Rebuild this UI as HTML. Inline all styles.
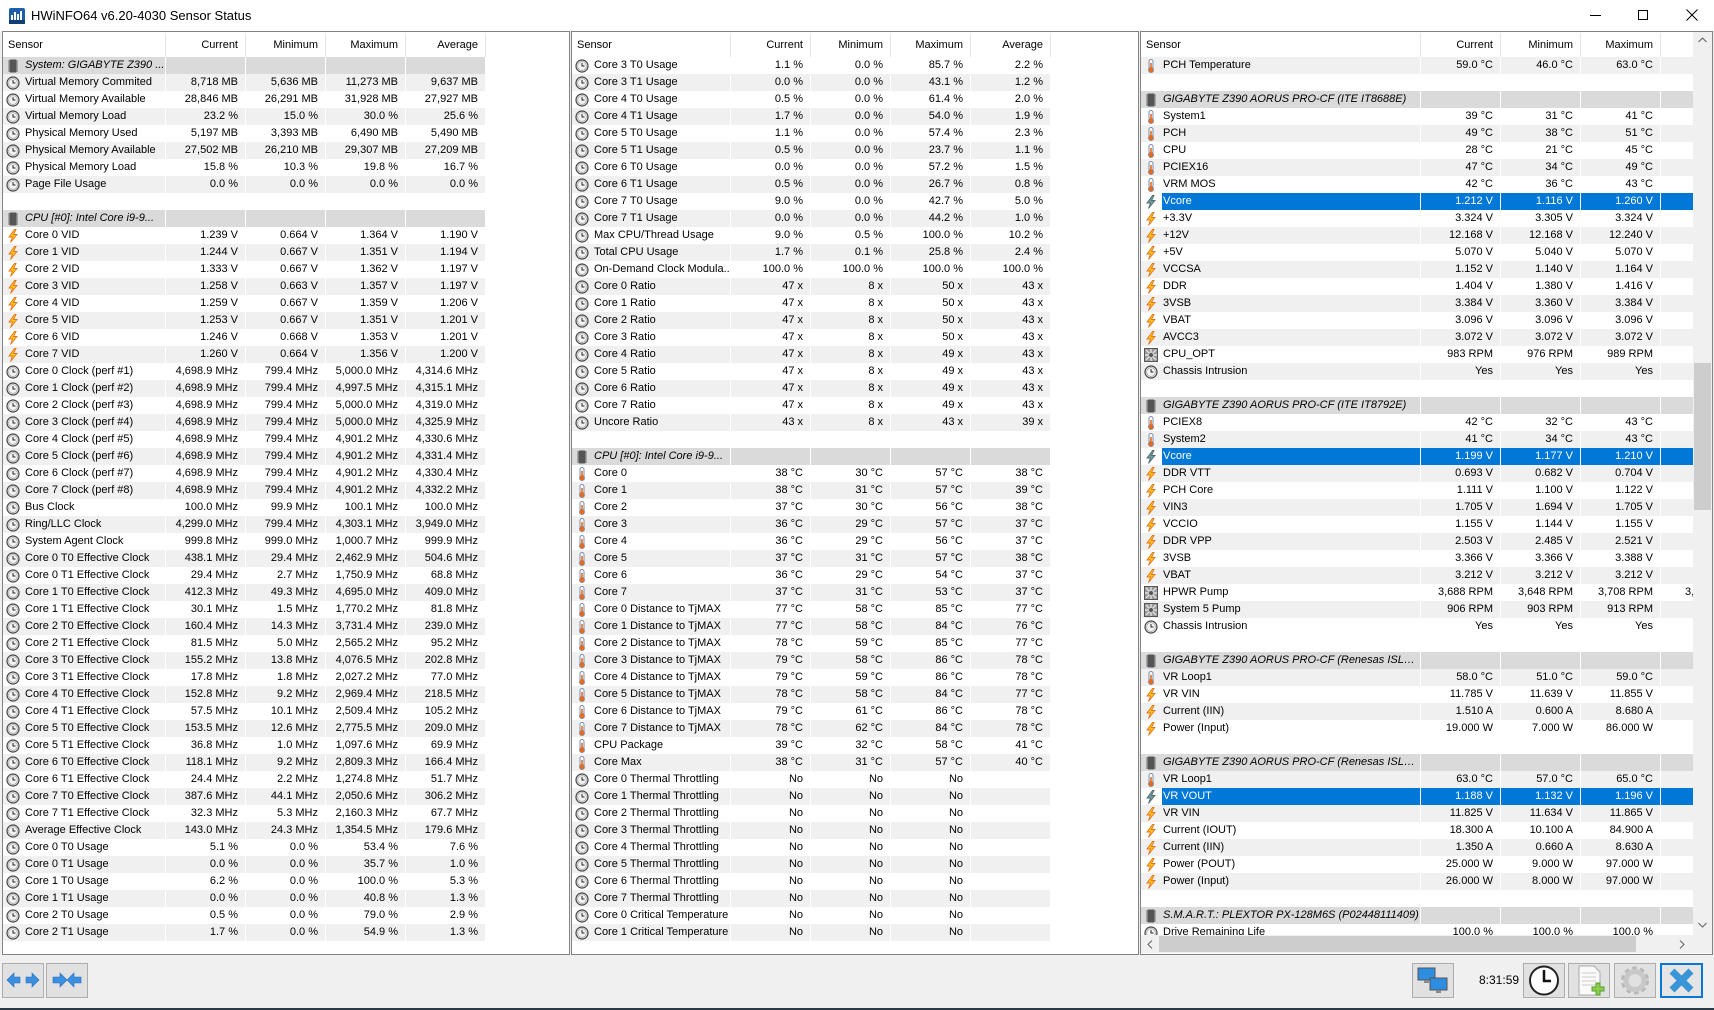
<!DOCTYPE html>
<html><head><meta charset="utf-8">
<style>
*{box-sizing:border-box}
body{margin:0;width:1714px;height:1010px;background:#f0f0f0;position:relative;overflow:hidden;font:11px "Liberation Sans",sans-serif;color:#000}
.tb{position:absolute;left:0;top:0;width:1714px;height:31px;background:#fff}
.tt{position:absolute;left:31px;top:8px;font-size:13px}
.p{position:absolute;top:31px;height:924px;background:#fff;border:1px solid #828282;overflow:hidden}
.hd{height:24px;margin-top:1px;display:flex;white-space:nowrap}
.hd span{flex:none;border-right:1px solid #e5e5e5;text-align:right;padding-right:7px;line-height:24px;width:80px}
.hd span:first-child{text-align:left;padding-left:5px}
.r{display:flex;height:17px;line-height:17px;white-space:nowrap}
.r>*{flex:none;margin-right:1px;overflow:hidden}
.r b{font-weight:normal;display:flex}
.r b span{overflow:hidden;text-overflow:ellipsis;min-width:0;flex:1}
.r i{width:22px;flex:none;display:flex;align-items:center;padding-left:3px}
.r i svg{width:14px;height:14px}
.r u{text-decoration:none;width:79px;text-align:right;padding-right:7px}
.p3 .r u:last-child{padding-right:0}
.p1 .r b,.p1 .hd span:first-child{width:162px}
.p1 .hd span:first-child{width:163px}
.p2 .r b{width:158px}.p2 .hd span:first-child{width:159px}
.p3 .r b{width:279px}.p3 .hd span:first-child{width:280px}
.o .r:nth-child(even)>*{background:#f0f0f0}
.ev .r:nth-child(odd)>*{background:#f0f0f0}
.r.e>*{background:#fff!important}
.r.g>*{background:#dadada!important}
.r.g b{font-style:italic}
.r.s>*{background:#0078d7!important;color:#fff}
.r.s b{background:linear-gradient(to right,#fff 21px,#0078d7 21px)!important}
.vs{position:absolute;left:1693px;top:32px;width:19px;height:903px;background:#f0f0f0}
.hs{position:absolute;left:1141px;top:935px;width:571px;height:18px;background:#f0f0f0}
.btn{position:absolute;top:963px;height:35px;background:#e1e1e1;border:1px solid #adadad}
</style></head><body>
<svg width="0" height="0" style="position:absolute">
<defs>
<symbol id="c" viewBox="0 0 14 14"><circle cx="7" cy="7" r="6" fill="#e6e6e6" stroke="#444" stroke-width="1.2"/><circle cx="7" cy="7" r="4.3" fill="#f4f4f4" stroke="#999" stroke-width=".6"/><path d="M7 4v3h2.5" stroke="#222" fill="none" stroke-width="1"/></symbol>
<symbol id="v" viewBox="0 0 14 14"><path d="M8.5 0.5L3 8h3.5L4.5 13.5 11 5.5H7.5L10 0.5z" fill="#ffc61a" stroke="#e4731a" stroke-width=".9"/></symbol>
<symbol id="vs" viewBox="0 0 14 14"><path d="M8.5 0.5L3 8h3.5L4.5 13.5 11 5.5H7.5L10 0.5z" fill="#7a9aa0" stroke="#4b6c70" stroke-width=".9"/></symbol>
<symbol id="t" viewBox="0 0 14 14"><rect x="5" y="0.5" width="4" height="10" rx="2" fill="#fff" stroke="#7a8ca8"/><circle cx="7" cy="11" r="2.6" fill="#ea6a1c" stroke="#7a8ca8" stroke-width=".7"/><rect x="6.2" y="4" width="1.6" height="7" fill="#ea6a1c"/></symbol>
<symbol id="k" viewBox="0 0 14 14"><rect x="3.5" y="0.5" width="7" height="13" fill="#555" rx="1"/><path d="M2 2h1.5M2 4h1.5M2 6h1.5M2 8h1.5M2 10h1.5M2 12h1.5M10.5 2H12M10.5 4H12M10.5 6H12M10.5 8H12M10.5 10H12M10.5 12H12" stroke="#777"/></symbol>
<symbol id="f" viewBox="0 0 14 14"><rect x="0.5" y="0.5" width="13" height="13" fill="#9a9a9a" stroke="#555"/><path d="M7 1v12M1 7h12M2 2l10 10M12 2L2 12" stroke="#eee" stroke-width="1.2"/><circle cx="7" cy="7" r="2" fill="#555"/></symbol>
</defs></svg>

<div class="tb">
<svg style="position:absolute;left:9px;top:8px" width="16" height="16" viewBox="0 0 16 16"><rect width="16" height="16" rx="2" fill="#1d5fa8"/><path d="M3 13V7M6 13V4M9 13V6M12 13V3" stroke="#fff" stroke-width="2"/><rect x="0" y="12" width="16" height="4" fill="#0f3e75"/></svg>
<div class="tt">HWiNFO64 v6.20-4030 Sensor Status</div>
<div style="position:absolute;left:1590px;top:15px;width:11px;height:1px;background:#000"></div>
<div style="position:absolute;left:1638px;top:10px;width:10px;height:10px;border:1px solid #000"></div>
<svg style="position:absolute;left:1686px;top:9px" width="12" height="12"><path d="M0.5 0.5L11.5 11.5M11.5 0.5L0.5 11.5" stroke="#000"/></svg>
</div>

<div class="p p1 o" style="left:2px;width:568px">
<div class="hd"><span>Sensor</span><span>Current</span><span>Minimum</span><span>Maximum</span><span>Average</span></div>
<div>
<div class="r g"><b><i><svg><use href="#k"/></svg></i>System: GIGABYTE Z390 ...</b><u></u><u></u><u></u><u></u></div>
<div class="r"><b><i><svg><use href="#c"/></svg></i>Virtual Memory Commited</b><u>8,718 MB</u><u>5,636 MB</u><u>11,273 MB</u><u>9,637 MB</u></div>
<div class="r"><b><i><svg><use href="#c"/></svg></i>Virtual Memory Available</b><u>28,846 MB</u><u>26,291 MB</u><u>31,928 MB</u><u>27,927 MB</u></div>
<div class="r"><b><i><svg><use href="#c"/></svg></i>Virtual Memory Load</b><u>23.2 %</u><u>15.0 %</u><u>30.0 %</u><u>25.6 %</u></div>
<div class="r"><b><i><svg><use href="#c"/></svg></i>Physical Memory Used</b><u>5,197 MB</u><u>3,393 MB</u><u>6,490 MB</u><u>5,490 MB</u></div>
<div class="r"><b><i><svg><use href="#c"/></svg></i>Physical Memory Available</b><u>27,502 MB</u><u>26,210 MB</u><u>29,307 MB</u><u>27,209 MB</u></div>
<div class="r"><b><i><svg><use href="#c"/></svg></i>Physical Memory Load</b><u>15.8 %</u><u>10.3 %</u><u>19.8 %</u><u>16.7 %</u></div>
<div class="r"><b><i><svg><use href="#c"/></svg></i>Page File Usage</b><u>0.0 %</u><u>0.0 %</u><u>0.0 %</u><u>0.0 %</u></div>
<div class="r e"><b></b><u></u><u></u><u></u><u></u></div>
<div class="r g"><b><i><svg><use href="#k"/></svg></i>CPU [#0]: Intel Core i9-9...</b><u></u><u></u><u></u><u></u></div>
<div class="r"><b><i><svg><use href="#v"/></svg></i>Core 0 VID</b><u>1.239 V</u><u>0.664 V</u><u>1.364 V</u><u>1.190 V</u></div>
<div class="r"><b><i><svg><use href="#v"/></svg></i>Core 1 VID</b><u>1.244 V</u><u>0.667 V</u><u>1.351 V</u><u>1.194 V</u></div>
<div class="r"><b><i><svg><use href="#v"/></svg></i>Core 2 VID</b><u>1.333 V</u><u>0.667 V</u><u>1.362 V</u><u>1.197 V</u></div>
<div class="r"><b><i><svg><use href="#v"/></svg></i>Core 3 VID</b><u>1.258 V</u><u>0.663 V</u><u>1.357 V</u><u>1.197 V</u></div>
<div class="r"><b><i><svg><use href="#v"/></svg></i>Core 4 VID</b><u>1.259 V</u><u>0.667 V</u><u>1.359 V</u><u>1.206 V</u></div>
<div class="r"><b><i><svg><use href="#v"/></svg></i>Core 5 VID</b><u>1.253 V</u><u>0.667 V</u><u>1.351 V</u><u>1.201 V</u></div>
<div class="r"><b><i><svg><use href="#v"/></svg></i>Core 6 VID</b><u>1.246 V</u><u>0.668 V</u><u>1.353 V</u><u>1.201 V</u></div>
<div class="r"><b><i><svg><use href="#v"/></svg></i>Core 7 VID</b><u>1.260 V</u><u>0.664 V</u><u>1.356 V</u><u>1.200 V</u></div>
<div class="r"><b><i><svg><use href="#c"/></svg></i>Core 0 Clock (perf #1)</b><u>4,698.9 MHz</u><u>799.4 MHz</u><u>5,000.0 MHz</u><u>4,314.6 MHz</u></div>
<div class="r"><b><i><svg><use href="#c"/></svg></i>Core 1 Clock (perf #2)</b><u>4,698.9 MHz</u><u>799.4 MHz</u><u>4,997.5 MHz</u><u>4,315.1 MHz</u></div>
<div class="r"><b><i><svg><use href="#c"/></svg></i>Core 2 Clock (perf #3)</b><u>4,698.9 MHz</u><u>799.4 MHz</u><u>5,000.0 MHz</u><u>4,319.0 MHz</u></div>
<div class="r"><b><i><svg><use href="#c"/></svg></i>Core 3 Clock (perf #4)</b><u>4,698.9 MHz</u><u>799.4 MHz</u><u>5,000.0 MHz</u><u>4,325.9 MHz</u></div>
<div class="r"><b><i><svg><use href="#c"/></svg></i>Core 4 Clock (perf #5)</b><u>4,698.9 MHz</u><u>799.4 MHz</u><u>4,901.2 MHz</u><u>4,330.6 MHz</u></div>
<div class="r"><b><i><svg><use href="#c"/></svg></i>Core 5 Clock (perf #6)</b><u>4,698.9 MHz</u><u>799.4 MHz</u><u>4,901.2 MHz</u><u>4,331.4 MHz</u></div>
<div class="r"><b><i><svg><use href="#c"/></svg></i>Core 6 Clock (perf #7)</b><u>4,698.9 MHz</u><u>799.4 MHz</u><u>4,901.2 MHz</u><u>4,330.4 MHz</u></div>
<div class="r"><b><i><svg><use href="#c"/></svg></i>Core 7 Clock (perf #8)</b><u>4,698.9 MHz</u><u>799.4 MHz</u><u>4,901.2 MHz</u><u>4,332.2 MHz</u></div>
<div class="r"><b><i><svg><use href="#c"/></svg></i>Bus Clock</b><u>100.0 MHz</u><u>99.9 MHz</u><u>100.1 MHz</u><u>100.0 MHz</u></div>
<div class="r"><b><i><svg><use href="#c"/></svg></i>Ring/LLC Clock</b><u>4,299.0 MHz</u><u>799.4 MHz</u><u>4,303.1 MHz</u><u>3,949.0 MHz</u></div>
<div class="r"><b><i><svg><use href="#c"/></svg></i>System Agent Clock</b><u>999.8 MHz</u><u>999.0 MHz</u><u>1,000.7 MHz</u><u>999.9 MHz</u></div>
<div class="r"><b><i><svg><use href="#c"/></svg></i>Core 0 T0 Effective Clock</b><u>438.1 MHz</u><u>29.4 MHz</u><u>2,462.9 MHz</u><u>504.6 MHz</u></div>
<div class="r"><b><i><svg><use href="#c"/></svg></i>Core 0 T1 Effective Clock</b><u>29.4 MHz</u><u>2.7 MHz</u><u>1,750.9 MHz</u><u>68.8 MHz</u></div>
<div class="r"><b><i><svg><use href="#c"/></svg></i>Core 1 T0 Effective Clock</b><u>412.3 MHz</u><u>49.3 MHz</u><u>4,695.0 MHz</u><u>409.0 MHz</u></div>
<div class="r"><b><i><svg><use href="#c"/></svg></i>Core 1 T1 Effective Clock</b><u>30.1 MHz</u><u>1.5 MHz</u><u>1,770.2 MHz</u><u>81.8 MHz</u></div>
<div class="r"><b><i><svg><use href="#c"/></svg></i>Core 2 T0 Effective Clock</b><u>160.4 MHz</u><u>14.3 MHz</u><u>3,731.4 MHz</u><u>239.0 MHz</u></div>
<div class="r"><b><i><svg><use href="#c"/></svg></i>Core 2 T1 Effective Clock</b><u>81.5 MHz</u><u>5.0 MHz</u><u>2,565.2 MHz</u><u>95.2 MHz</u></div>
<div class="r"><b><i><svg><use href="#c"/></svg></i>Core 3 T0 Effective Clock</b><u>155.2 MHz</u><u>13.8 MHz</u><u>4,076.5 MHz</u><u>202.8 MHz</u></div>
<div class="r"><b><i><svg><use href="#c"/></svg></i>Core 3 T1 Effective Clock</b><u>17.8 MHz</u><u>1.8 MHz</u><u>2,027.2 MHz</u><u>77.0 MHz</u></div>
<div class="r"><b><i><svg><use href="#c"/></svg></i>Core 4 T0 Effective Clock</b><u>152.8 MHz</u><u>9.2 MHz</u><u>2,969.4 MHz</u><u>218.5 MHz</u></div>
<div class="r"><b><i><svg><use href="#c"/></svg></i>Core 4 T1 Effective Clock</b><u>57.5 MHz</u><u>10.1 MHz</u><u>2,509.4 MHz</u><u>105.2 MHz</u></div>
<div class="r"><b><i><svg><use href="#c"/></svg></i>Core 5 T0 Effective Clock</b><u>153.5 MHz</u><u>12.6 MHz</u><u>2,775.5 MHz</u><u>209.0 MHz</u></div>
<div class="r"><b><i><svg><use href="#c"/></svg></i>Core 5 T1 Effective Clock</b><u>36.8 MHz</u><u>1.0 MHz</u><u>1,097.6 MHz</u><u>69.9 MHz</u></div>
<div class="r"><b><i><svg><use href="#c"/></svg></i>Core 6 T0 Effective Clock</b><u>118.1 MHz</u><u>9.2 MHz</u><u>2,809.3 MHz</u><u>166.4 MHz</u></div>
<div class="r"><b><i><svg><use href="#c"/></svg></i>Core 6 T1 Effective Clock</b><u>24.4 MHz</u><u>2.2 MHz</u><u>1,274.8 MHz</u><u>51.7 MHz</u></div>
<div class="r"><b><i><svg><use href="#c"/></svg></i>Core 7 T0 Effective Clock</b><u>387.6 MHz</u><u>44.1 MHz</u><u>2,050.6 MHz</u><u>306.2 MHz</u></div>
<div class="r"><b><i><svg><use href="#c"/></svg></i>Core 7 T1 Effective Clock</b><u>32.3 MHz</u><u>5.3 MHz</u><u>2,160.3 MHz</u><u>67.7 MHz</u></div>
<div class="r"><b><i><svg><use href="#c"/></svg></i>Average Effective Clock</b><u>143.0 MHz</u><u>24.3 MHz</u><u>1,354.5 MHz</u><u>179.6 MHz</u></div>
<div class="r"><b><i><svg><use href="#c"/></svg></i>Core 0 T0 Usage</b><u>5.1 %</u><u>0.0 %</u><u>53.4 %</u><u>7.6 %</u></div>
<div class="r"><b><i><svg><use href="#c"/></svg></i>Core 0 T1 Usage</b><u>0.0 %</u><u>0.0 %</u><u>35.7 %</u><u>1.0 %</u></div>
<div class="r"><b><i><svg><use href="#c"/></svg></i>Core 1 T0 Usage</b><u>6.2 %</u><u>0.0 %</u><u>100.0 %</u><u>5.3 %</u></div>
<div class="r"><b><i><svg><use href="#c"/></svg></i>Core 1 T1 Usage</b><u>0.0 %</u><u>0.0 %</u><u>40.8 %</u><u>1.3 %</u></div>
<div class="r"><b><i><svg><use href="#c"/></svg></i>Core 2 T0 Usage</b><u>0.5 %</u><u>0.0 %</u><u>79.0 %</u><u>2.9 %</u></div>
<div class="r"><b><i><svg><use href="#c"/></svg></i>Core 2 T1 Usage</b><u>1.7 %</u><u>0.0 %</u><u>54.9 %</u><u>1.3 %</u></div>
<div class="r e"><b></b><u></u><u></u><u></u><u></u></div>
</div></div>

<div class="p p2 o" style="left:571px;width:568px">
<div class="hd"><span>Sensor</span><span>Current</span><span>Minimum</span><span>Maximum</span><span>Average</span></div>
<div>
<div class="r"><b><i><svg><use href="#c"/></svg></i>Core 3 T0 Usage</b><u>1.1 %</u><u>0.0 %</u><u>85.7 %</u><u>2.2 %</u></div>
<div class="r"><b><i><svg><use href="#c"/></svg></i>Core 3 T1 Usage</b><u>0.0 %</u><u>0.0 %</u><u>43.1 %</u><u>1.2 %</u></div>
<div class="r"><b><i><svg><use href="#c"/></svg></i>Core 4 T0 Usage</b><u>0.5 %</u><u>0.0 %</u><u>61.4 %</u><u>2.0 %</u></div>
<div class="r"><b><i><svg><use href="#c"/></svg></i>Core 4 T1 Usage</b><u>1.7 %</u><u>0.0 %</u><u>54.0 %</u><u>1.9 %</u></div>
<div class="r"><b><i><svg><use href="#c"/></svg></i>Core 5 T0 Usage</b><u>1.1 %</u><u>0.0 %</u><u>57.4 %</u><u>2.3 %</u></div>
<div class="r"><b><i><svg><use href="#c"/></svg></i>Core 5 T1 Usage</b><u>0.5 %</u><u>0.0 %</u><u>23.7 %</u><u>1.1 %</u></div>
<div class="r"><b><i><svg><use href="#c"/></svg></i>Core 6 T0 Usage</b><u>0.0 %</u><u>0.0 %</u><u>57.2 %</u><u>1.5 %</u></div>
<div class="r"><b><i><svg><use href="#c"/></svg></i>Core 6 T1 Usage</b><u>0.5 %</u><u>0.0 %</u><u>26.7 %</u><u>0.8 %</u></div>
<div class="r"><b><i><svg><use href="#c"/></svg></i>Core 7 T0 Usage</b><u>9.0 %</u><u>0.0 %</u><u>42.7 %</u><u>5.0 %</u></div>
<div class="r"><b><i><svg><use href="#c"/></svg></i>Core 7 T1 Usage</b><u>0.0 %</u><u>0.0 %</u><u>44.2 %</u><u>1.0 %</u></div>
<div class="r"><b><i><svg><use href="#c"/></svg></i>Max CPU/Thread Usage</b><u>9.0 %</u><u>0.5 %</u><u>100.0 %</u><u>10.2 %</u></div>
<div class="r"><b><i><svg><use href="#c"/></svg></i>Total CPU Usage</b><u>1.7 %</u><u>0.1 %</u><u>25.8 %</u><u>2.4 %</u></div>
<div class="r"><b><i><svg><use href="#c"/></svg></i>On-Demand Clock Modula...</b><u>100.0 %</u><u>100.0 %</u><u>100.0 %</u><u>100.0 %</u></div>
<div class="r"><b><i><svg><use href="#c"/></svg></i>Core 0 Ratio</b><u>47 x</u><u>8 x</u><u>50 x</u><u>43 x</u></div>
<div class="r"><b><i><svg><use href="#c"/></svg></i>Core 1 Ratio</b><u>47 x</u><u>8 x</u><u>50 x</u><u>43 x</u></div>
<div class="r"><b><i><svg><use href="#c"/></svg></i>Core 2 Ratio</b><u>47 x</u><u>8 x</u><u>50 x</u><u>43 x</u></div>
<div class="r"><b><i><svg><use href="#c"/></svg></i>Core 3 Ratio</b><u>47 x</u><u>8 x</u><u>50 x</u><u>43 x</u></div>
<div class="r"><b><i><svg><use href="#c"/></svg></i>Core 4 Ratio</b><u>47 x</u><u>8 x</u><u>49 x</u><u>43 x</u></div>
<div class="r"><b><i><svg><use href="#c"/></svg></i>Core 5 Ratio</b><u>47 x</u><u>8 x</u><u>49 x</u><u>43 x</u></div>
<div class="r"><b><i><svg><use href="#c"/></svg></i>Core 6 Ratio</b><u>47 x</u><u>8 x</u><u>49 x</u><u>43 x</u></div>
<div class="r"><b><i><svg><use href="#c"/></svg></i>Core 7 Ratio</b><u>47 x</u><u>8 x</u><u>49 x</u><u>43 x</u></div>
<div class="r"><b><i><svg><use href="#c"/></svg></i>Uncore Ratio</b><u>43 x</u><u>8 x</u><u>43 x</u><u>39 x</u></div>
<div class="r e"><b></b><u></u><u></u><u></u><u></u></div>
<div class="r g"><b><i><svg><use href="#k"/></svg></i>CPU [#0]: Intel Core i9-9...</b><u></u><u></u><u></u><u></u></div>
<div class="r"><b><i><svg><use href="#t"/></svg></i>Core 0</b><u>38 °C</u><u>30 °C</u><u>57 °C</u><u>38 °C</u></div>
<div class="r"><b><i><svg><use href="#t"/></svg></i>Core 1</b><u>38 °C</u><u>31 °C</u><u>57 °C</u><u>39 °C</u></div>
<div class="r"><b><i><svg><use href="#t"/></svg></i>Core 2</b><u>37 °C</u><u>30 °C</u><u>56 °C</u><u>38 °C</u></div>
<div class="r"><b><i><svg><use href="#t"/></svg></i>Core 3</b><u>36 °C</u><u>29 °C</u><u>57 °C</u><u>37 °C</u></div>
<div class="r"><b><i><svg><use href="#t"/></svg></i>Core 4</b><u>36 °C</u><u>29 °C</u><u>56 °C</u><u>37 °C</u></div>
<div class="r"><b><i><svg><use href="#t"/></svg></i>Core 5</b><u>37 °C</u><u>31 °C</u><u>57 °C</u><u>38 °C</u></div>
<div class="r"><b><i><svg><use href="#t"/></svg></i>Core 6</b><u>36 °C</u><u>29 °C</u><u>54 °C</u><u>37 °C</u></div>
<div class="r"><b><i><svg><use href="#t"/></svg></i>Core 7</b><u>37 °C</u><u>31 °C</u><u>53 °C</u><u>37 °C</u></div>
<div class="r"><b><i><svg><use href="#t"/></svg></i>Core 0 Distance to TjMAX</b><u>77 °C</u><u>58 °C</u><u>85 °C</u><u>77 °C</u></div>
<div class="r"><b><i><svg><use href="#t"/></svg></i>Core 1 Distance to TjMAX</b><u>77 °C</u><u>58 °C</u><u>84 °C</u><u>76 °C</u></div>
<div class="r"><b><i><svg><use href="#t"/></svg></i>Core 2 Distance to TjMAX</b><u>78 °C</u><u>59 °C</u><u>85 °C</u><u>77 °C</u></div>
<div class="r"><b><i><svg><use href="#t"/></svg></i>Core 3 Distance to TjMAX</b><u>79 °C</u><u>58 °C</u><u>86 °C</u><u>78 °C</u></div>
<div class="r"><b><i><svg><use href="#t"/></svg></i>Core 4 Distance to TjMAX</b><u>79 °C</u><u>59 °C</u><u>86 °C</u><u>78 °C</u></div>
<div class="r"><b><i><svg><use href="#t"/></svg></i>Core 5 Distance to TjMAX</b><u>78 °C</u><u>58 °C</u><u>84 °C</u><u>77 °C</u></div>
<div class="r"><b><i><svg><use href="#t"/></svg></i>Core 6 Distance to TjMAX</b><u>79 °C</u><u>61 °C</u><u>86 °C</u><u>78 °C</u></div>
<div class="r"><b><i><svg><use href="#t"/></svg></i>Core 7 Distance to TjMAX</b><u>78 °C</u><u>62 °C</u><u>84 °C</u><u>78 °C</u></div>
<div class="r"><b><i><svg><use href="#t"/></svg></i>CPU Package</b><u>39 °C</u><u>32 °C</u><u>58 °C</u><u>41 °C</u></div>
<div class="r"><b><i><svg><use href="#t"/></svg></i>Core Max</b><u>38 °C</u><u>31 °C</u><u>57 °C</u><u>40 °C</u></div>
<div class="r"><b><i><svg><use href="#c"/></svg></i>Core 0 Thermal Throttling</b><u>No</u><u>No</u><u>No</u><u></u></div>
<div class="r"><b><i><svg><use href="#c"/></svg></i>Core 1 Thermal Throttling</b><u>No</u><u>No</u><u>No</u><u></u></div>
<div class="r"><b><i><svg><use href="#c"/></svg></i>Core 2 Thermal Throttling</b><u>No</u><u>No</u><u>No</u><u></u></div>
<div class="r"><b><i><svg><use href="#c"/></svg></i>Core 3 Thermal Throttling</b><u>No</u><u>No</u><u>No</u><u></u></div>
<div class="r"><b><i><svg><use href="#c"/></svg></i>Core 4 Thermal Throttling</b><u>No</u><u>No</u><u>No</u><u></u></div>
<div class="r"><b><i><svg><use href="#c"/></svg></i>Core 5 Thermal Throttling</b><u>No</u><u>No</u><u>No</u><u></u></div>
<div class="r"><b><i><svg><use href="#c"/></svg></i>Core 6 Thermal Throttling</b><u>No</u><u>No</u><u>No</u><u></u></div>
<div class="r"><b><i><svg><use href="#c"/></svg></i>Core 7 Thermal Throttling</b><u>No</u><u>No</u><u>No</u><u></u></div>
<div class="r"><b><i><svg><use href="#c"/></svg></i>Core 0 Critical Temperature</b><u>No</u><u>No</u><u>No</u><u></u></div>
<div class="r"><b><i><svg><use href="#c"/></svg></i>Core 1 Critical Temperature</b><u>No</u><u>No</u><u>No</u><u></u></div>
<div class="r e"><b></b><u></u><u></u><u></u><u></u></div>
</div></div>

<div class="p p3 ev" style="left:1140px;width:573px">
<div class="hd"><span>Sensor</span><span>Current</span><span>Minimum</span><span>Maximum</span><span></span></div>
<div>
<div class="r"><b><i><svg><use href="#t"/></svg></i>PCH Temperature</b><u>59.0 °C</u><u>46.0 °C</u><u>63.0 °C</u><u></u></div>
<div class="r e"><b></b><u></u><u></u><u></u><u></u></div>
<div class="r g"><b><i><svg><use href="#k"/></svg></i><span>GIGABYTE Z390 AORUS PRO-CF (ITE IT8688E)</span></b><u></u><u></u><u></u><u></u></div>
<div class="r"><b><i><svg><use href="#t"/></svg></i>System1</b><u>39 °C</u><u>31 °C</u><u>41 °C</u><u></u></div>
<div class="r"><b><i><svg><use href="#t"/></svg></i>PCH</b><u>49 °C</u><u>38 °C</u><u>51 °C</u><u></u></div>
<div class="r"><b><i><svg><use href="#t"/></svg></i>CPU</b><u>28 °C</u><u>21 °C</u><u>45 °C</u><u></u></div>
<div class="r"><b><i><svg><use href="#t"/></svg></i>PCIEX16</b><u>47 °C</u><u>34 °C</u><u>49 °C</u><u></u></div>
<div class="r"><b><i><svg><use href="#t"/></svg></i>VRM MOS</b><u>42 °C</u><u>36 °C</u><u>43 °C</u><u></u></div>
<div class="r s"><b><i><svg><use href="#vs"/></svg></i>Vcore</b><u>1.212 V</u><u>1.116 V</u><u>1.260 V</u><u></u></div>
<div class="r"><b><i><svg><use href="#v"/></svg></i>+3.3V</b><u>3.324 V</u><u>3.305 V</u><u>3.324 V</u><u></u></div>
<div class="r"><b><i><svg><use href="#v"/></svg></i>+12V</b><u>12.168 V</u><u>12.168 V</u><u>12.240 V</u><u></u></div>
<div class="r"><b><i><svg><use href="#v"/></svg></i>+5V</b><u>5.070 V</u><u>5.040 V</u><u>5.070 V</u><u></u></div>
<div class="r"><b><i><svg><use href="#v"/></svg></i>VCCSA</b><u>1.152 V</u><u>1.140 V</u><u>1.164 V</u><u></u></div>
<div class="r"><b><i><svg><use href="#v"/></svg></i>DDR</b><u>1.404 V</u><u>1.380 V</u><u>1.416 V</u><u></u></div>
<div class="r"><b><i><svg><use href="#v"/></svg></i>3VSB</b><u>3.384 V</u><u>3.360 V</u><u>3.384 V</u><u></u></div>
<div class="r"><b><i><svg><use href="#v"/></svg></i>VBAT</b><u>3.096 V</u><u>3.096 V</u><u>3.096 V</u><u></u></div>
<div class="r"><b><i><svg><use href="#v"/></svg></i>AVCC3</b><u>3.072 V</u><u>3.072 V</u><u>3.072 V</u><u></u></div>
<div class="r"><b><i><svg><use href="#f"/></svg></i>CPU_OPT</b><u>983 RPM</u><u>976 RPM</u><u>989 RPM</u><u></u></div>
<div class="r"><b><i><svg><use href="#c"/></svg></i>Chassis Intrusion</b><u>Yes</u><u>Yes</u><u>Yes</u><u></u></div>
<div class="r e"><b></b><u></u><u></u><u></u><u></u></div>
<div class="r g"><b><i><svg><use href="#k"/></svg></i><span>GIGABYTE Z390 AORUS PRO-CF (ITE IT8792E)</span></b><u></u><u></u><u></u><u></u></div>
<div class="r"><b><i><svg><use href="#t"/></svg></i>PCIEX8</b><u>42 °C</u><u>32 °C</u><u>43 °C</u><u></u></div>
<div class="r"><b><i><svg><use href="#t"/></svg></i>System2</b><u>41 °C</u><u>34 °C</u><u>43 °C</u><u></u></div>
<div class="r s"><b><i><svg><use href="#vs"/></svg></i>Vcore</b><u>1.199 V</u><u>1.177 V</u><u>1.210 V</u><u></u></div>
<div class="r"><b><i><svg><use href="#v"/></svg></i>DDR VTT</b><u>0.693 V</u><u>0.682 V</u><u>0.704 V</u><u></u></div>
<div class="r"><b><i><svg><use href="#v"/></svg></i>PCH Core</b><u>1.111 V</u><u>1.100 V</u><u>1.122 V</u><u></u></div>
<div class="r"><b><i><svg><use href="#v"/></svg></i>VIN3</b><u>1.705 V</u><u>1.694 V</u><u>1.705 V</u><u></u></div>
<div class="r"><b><i><svg><use href="#v"/></svg></i>VCCIO</b><u>1.155 V</u><u>1.144 V</u><u>1.155 V</u><u></u></div>
<div class="r"><b><i><svg><use href="#v"/></svg></i>DDR VPP</b><u>2.503 V</u><u>2.485 V</u><u>2.521 V</u><u></u></div>
<div class="r"><b><i><svg><use href="#v"/></svg></i>3VSB</b><u>3.366 V</u><u>3.366 V</u><u>3.388 V</u><u></u></div>
<div class="r"><b><i><svg><use href="#v"/></svg></i>VBAT</b><u>3.212 V</u><u>3.212 V</u><u>3.212 V</u><u></u></div>
<div class="r"><b><i><svg><use href="#f"/></svg></i>HPWR Pump</b><u>3,688 RPM</u><u>3,648 RPM</u><u>3,708 RPM</u><u>3,688 RPM</u></div>
<div class="r"><b><i><svg><use href="#f"/></svg></i>System 5 Pump</b><u>906 RPM</u><u>903 RPM</u><u>913 RPM</u><u></u></div>
<div class="r"><b><i><svg><use href="#c"/></svg></i>Chassis Intrusion</b><u>Yes</u><u>Yes</u><u>Yes</u><u></u></div>
<div class="r e"><b></b><u></u><u></u><u></u><u></u></div>
<div class="r g"><b><i><svg><use href="#k"/></svg></i><span>GIGABYTE Z390 AORUS PRO-CF (Renesas ISL69138)</span></b><u></u><u></u><u></u><u></u></div>
<div class="r"><b><i><svg><use href="#t"/></svg></i>VR Loop1</b><u>58.0 °C</u><u>51.0 °C</u><u>59.0 °C</u><u></u></div>
<div class="r"><b><i><svg><use href="#v"/></svg></i>VR VIN</b><u>11.785 V</u><u>11.639 V</u><u>11.855 V</u><u></u></div>
<div class="r"><b><i><svg><use href="#v"/></svg></i>Current (IIN)</b><u>1.510 A</u><u>0.600 A</u><u>8.680 A</u><u></u></div>
<div class="r"><b><i><svg><use href="#v"/></svg></i>Power (Input)</b><u>19.000 W</u><u>7.000 W</u><u>86.000 W</u><u>20.412 W</u></div>
<div class="r e"><b></b><u></u><u></u><u></u><u></u></div>
<div class="r g"><b><i><svg><use href="#k"/></svg></i><span>GIGABYTE Z390 AORUS PRO-CF (Renesas ISL69138)</span></b><u></u><u></u><u></u><u></u></div>
<div class="r"><b><i><svg><use href="#t"/></svg></i>VR Loop1</b><u>63.0 °C</u><u>57.0 °C</u><u>65.0 °C</u><u></u></div>
<div class="r s"><b><i><svg><use href="#vs"/></svg></i>VR VOUT</b><u>1.188 V</u><u>1.132 V</u><u>1.196 V</u><u></u></div>
<div class="r"><b><i><svg><use href="#v"/></svg></i>VR VIN</b><u>11.825 V</u><u>11.634 V</u><u>11.865 V</u><u></u></div>
<div class="r"><b><i><svg><use href="#v"/></svg></i>Current (IOUT)</b><u>18.300 A</u><u>10.100 A</u><u>84.900 A</u><u>21.312 A</u></div>
<div class="r"><b><i><svg><use href="#v"/></svg></i>Current (IIN)</b><u>1.350 A</u><u>0.660 A</u><u>8.630 A</u><u></u></div>
<div class="r"><b><i><svg><use href="#v"/></svg></i>Power (POUT)</b><u>25.000 W</u><u>9.000 W</u><u>97.000 W</u><u>26.412 W</u></div>
<div class="r"><b><i><svg><use href="#v"/></svg></i>Power (Input)</b><u>26.000 W</u><u>8.000 W</u><u>97.000 W</u><u>27.412 W</u></div>
<div class="r e"><b></b><u></u><u></u><u></u><u></u></div>
<div class="r g"><b><i><svg><use href="#k"/></svg></i><span>S.M.A.R.T.: PLEXTOR PX-128M6S (P02448111409)</span></b><u></u><u></u><u></u><u></u></div>
<div class="r"><b><i><svg><use href="#c"/></svg></i>Drive Remaining Life</b><u>100.0 %</u><u>100.0 %</u><u>100.0 %</u><u></u></div>
</div></div>

<div class="vs">
<svg style="position:absolute;left:5px;top:5px" width="9" height="6"><path d="M0.5 5L4.5 1 8.5 5" stroke="#606060" fill="none"/></svg>
<div style="position:absolute;left:1px;top:331px;width:17px;height:147px;background:#cdcdcd"></div>
<svg style="position:absolute;left:5px;top:890px" width="9" height="6"><path d="M0.5 1L4.5 5 8.5 1" stroke="#606060" fill="none"/></svg>
</div>
<div class="hs">
<svg style="position:absolute;left:6px;top:5px" width="6" height="9"><path d="M5 0.5L1 4.5 5 8.5" stroke="#606060" fill="none"/></svg>
<div style="position:absolute;left:18px;top:1px;width:477px;height:16px;background:#cdcdcd"></div>
<svg style="position:absolute;left:538px;top:5px" width="6" height="9"><path d="M1 0.5L5 4.5 1 8.5" stroke="#606060" fill="none"/></svg>
</div>
<div style="position:absolute;left:1693px;top:935px;width:19px;height:18px;background:#f0f0f0"></div>

<div class="btn" style="left:2px;width:42px"><svg width="40" height="33" viewBox="0 0 40 33"><path d="M4 16l7-7v4h6v6h-6v4z" fill="#3a8fe0" stroke="#2a6fb8" stroke-width=".6"/><path d="M36 16l-7-7v4h-6v6h6v4z" fill="#3a8fe0" stroke="#2a6fb8" stroke-width=".6"/></svg></div>
<div class="btn" style="left:46px;width:42px"><svg width="40" height="33" viewBox="0 0 40 33"><path d="M20 16l-7-7v4H6v6h7v4z" fill="#3a8fe0" stroke="#2a6fb8" stroke-width=".6"/><path d="M20 16l7-7v4h7v6h-7v4z" fill="#3a8fe0" stroke="#2a6fb8" stroke-width=".6"/></svg></div>

<div class="btn" style="left:1412px;width:42px"><svg width="40" height="33" viewBox="0 0 40 33"><rect x="5" y="4" width="17" height="12" fill="#2d8de0" stroke="#555"/><rect x="11" y="16" width="5" height="3" fill="#888"/><rect x="17" y="14" width="17" height="12" fill="#2d8de0" stroke="#555"/><rect x="23" y="26" width="5" height="3" fill="#888"/></svg></div>
<div style="position:absolute;left:1479px;top:973px;font-size:12px">8:31:59</div>
<div class="btn" style="left:1523px;width:42px"><svg width="40" height="33" viewBox="0 0 40 33"><circle cx="20" cy="16.5" r="14" fill="#fff" stroke="#222" stroke-width="2"/><path d="M20 6v11h7" stroke="#111" stroke-width="2.5" fill="none"/></svg></div>
<div class="btn" style="left:1568px;width:42px"><svg width="40" height="33" viewBox="0 0 40 33"><path d="M10 2h15l6 6v23H10z" fill="#fafafa" stroke="#aaa"/><path d="M13 9h14M13 13h14M13 17h14M13 21h14" stroke="#ccc"/><path d="M27 19h4v4h4v4h-4v4h-4v-4h-4v-4h4z" fill="#8cd050" stroke="#5a9a2a"/></svg></div>
<div class="btn" style="left:1614px;width:42px"><svg width="40" height="33" viewBox="0 0 40 33"><circle cx="20" cy="16.5" r="11" fill="none" stroke="#b8b8b8" stroke-width="6" stroke-dasharray="4 3"/><circle cx="20" cy="16.5" r="9" fill="none" stroke="#c8c8c8" stroke-width="5"/></svg></div>
<div class="btn" style="left:1660px;width:43px;border:2px solid #0a76d6;background:#e5e5e5"><svg width="39" height="31" viewBox="0 0 39 31"><path d="M10 6L29 25M29 6L10 25" stroke="#3a94d8" stroke-width="7"/></svg></div>

<div style="position:absolute;left:0;top:1008px;width:1714px;height:2px;background:#2b3a44"></div>
</body></html>
